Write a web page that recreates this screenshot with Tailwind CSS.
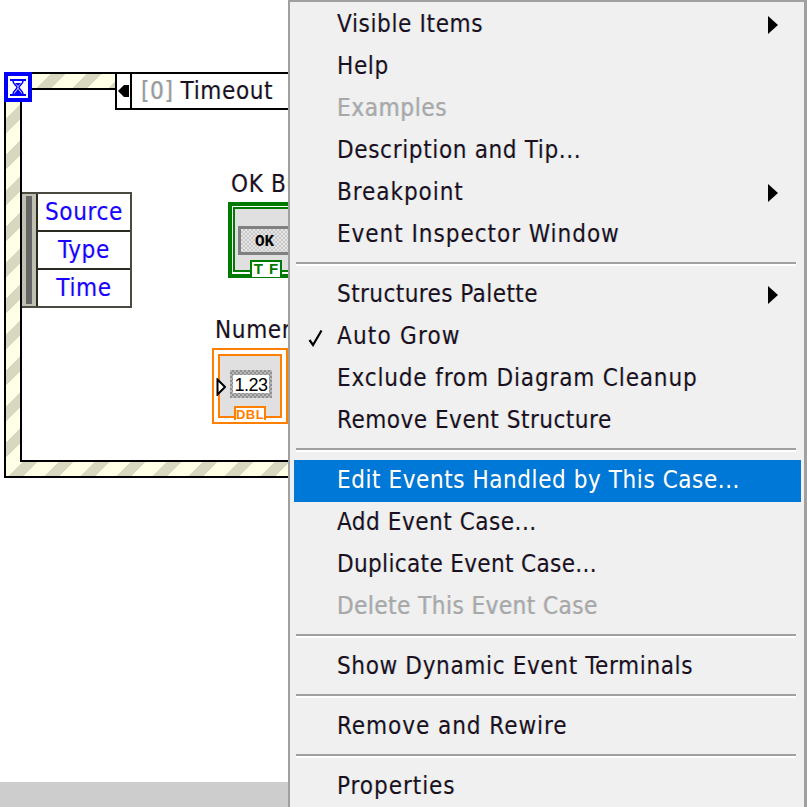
<!DOCTYPE html>
<html><head><meta charset="utf-8">
<script src="https://cdn.jsdelivr.net/npm/@tailwindcss/browser@4"></script>
</head>
<body class="m-0 bg-white">
<div class="relative w-[807px] h-[807px] overflow-hidden bg-white font-['DejaVu_Sans',sans-serif] font-stretch-condensed text-[24px] tracking-[0.65px] text-[#1a1020] [text-shadow:-0.6px_0_rgba(255,140,0,0.22),0.6px_0_rgba(0,150,255,0.28)]">

  <!-- event structure frame -->
  <div class="absolute left-[4px] top-[72px] w-[340px] h-[406px] border-2 border-black bg-[repeating-linear-gradient(135deg,#ffffe6_0px,#ffffe6_5.66px,#d8d8c0_5.66px,#d8d8c0_16.66px,#ffffe6_16.66px,#ffffe6_25.46px)]">
    <div class="absolute left-[14px] top-[14px] right-[-2px] bottom-[14px] bg-white border-2 border-black"></div>
  </div>

  <!-- hourglass terminal -->
  <div class="absolute left-[4px] top-[72px] w-[28px] h-[30px] bg-[#0000ff] flex items-center justify-center">
    <div class="w-[20px] h-[22px] bg-white flex items-center justify-center">
      <svg width="18" height="20" viewBox="0 0 18 20"><path d="M1 3H17M1 18H17" fill="none" stroke="#0000ff" stroke-width="2"/><path d="M4 4C4 7 8 9 8 10.500C8 12 4 14 4 17M14 4C14 7 10 9 10 10.500C10 12 14 14 14 17" fill="none" stroke="#0000ff" stroke-width="1.500"/><path d="M6 6H12L9 9ZM9 12L13 17H5Z" fill="#0000ff"/></svg>
    </div>
  </div>

  <!-- case selector -->
  <div class="absolute left-[115px] top-[72px] w-[180px] h-[38px] border-2 border-black bg-white flex items-center">
    <div class="w-[13px] h-full flex items-center justify-center">
      <svg width="12" height="12" viewBox="0 0 12 12"><path d="M0 6L6 0H11V12H6Z" fill="#000"/></svg>
    </div>
    <div class="w-[2px] h-full bg-black"></div>
    <div class="pl-[9px] whitespace-nowrap leading-none"><span class="text-[#9a9a9a]">[0]</span><span class="ml-[7px]">Timeout</span></div>
  </div>

  <!-- event data node -->
  <div class="absolute left-[22px] top-[192px] w-[110px] h-[116px] border-2 border-l-0 border-[#4a4a40] bg-white flex">
    <div class="w-[14px] bg-[#c0c0b0] flex justify-start pl-[4px] py-[2px]"><div class="w-[6px] bg-[#666666]"></div></div>
    <div class="flex-1 border-l-2 border-[#2a2a20] flex flex-col text-[#1a00ff] text-center leading-none">
      <div class="h-[36px] flex items-center justify-center">Source</div>
      <div class="h-[38px] flex items-center justify-center border-t-2 border-[#2a2a20]">Type</div>
      <div class="flex-1 flex items-center justify-center border-t-2 border-[#2a2a20]">Time</div>
    </div>
  </div>

  <!-- OK Button terminal -->
  <div class="absolute left-[231px] top-[170px] leading-[28px] whitespace-nowrap">OK Button</div>
  <div class="absolute left-[228px] top-[202px] w-[72px] h-[76px] border-4 border-[#007a00] bg-white p-[1px] [text-shadow:none]">
    <div class="relative w-full h-[65px] border-2 border-[#007a00] bg-[#e0e0e0]">
      <div class="absolute left-[3px] top-[17px] w-[60px] h-[29px] border-[3px] border-[#808080] bg-[repeating-conic-gradient(#c8c8c8_0_25%,#e6e6e6_0_50%)] bg-size-[4px_4px] flex items-center pt-[2px] pl-[14px] font-['Liberation_Mono',monospace] font-bold text-[16px] tracking-normal leading-none text-black">OK</div>
      <div class="absolute left-[15px] top-[51px] w-[32px] h-[17px] border-2 border-b-0 border-[#007a00] bg-white flex items-center justify-center gap-[6px] pb-[2px] font-['Liberation_Sans',sans-serif] font-bold text-[15px] tracking-normal leading-none text-[#007a00]"><span>T</span><span>F</span></div>
    </div>
  </div>

  <!-- Numeric terminal -->
  <div class="absolute left-[215px] top-[316px] leading-[28px] whitespace-nowrap">Numeric</div>
  <div class="absolute left-[212px] top-[348px] w-[76px] h-[76px] border-2 border-[#ff8000] bg-white p-[4px] [text-shadow:none]">
    <div class="relative w-full h-[64px] border-2 border-[#ff8000] bg-[#e0e0e0]">
      <div class="absolute left-[10px] top-[14px] w-[42px] h-[28px] bg-[repeating-conic-gradient(#909090_0_25%,#b8b8b8_0_50%)] bg-size-[4px_4px] flex items-center justify-center">
        <div class="w-[36px] h-[18px] bg-white flex items-center justify-center pt-[2px] font-['Liberation_Sans',sans-serif] text-[18px] tracking-[-0.5px] leading-none text-black">1.23</div>
      </div>
      <div class="absolute left-[14px] top-[50px] w-[32px] h-[14px] border-2 border-b-0 border-[#ff8000] bg-white flex items-center justify-center font-['Liberation_Sans',sans-serif] font-bold text-[13px] tracking-[0.5px] leading-none text-[#ff8000]">DBL</div>
    </div>
    <svg class="absolute left-[2px] top-[28px]" width="10" height="18" viewBox="0 0 10 18"><path d="M1.500 1.500L9 9L1.500 16.500Z" fill="#fff" stroke="#000" stroke-width="2"/></svg>
  </div>

  <!-- bottom bar -->
  <div class="absolute left-0 bottom-0 w-[290px] h-[25px] bg-[#cdcdcd]"></div>

  <!-- context menu -->
  <div class="absolute left-[288px] top-0 w-[519px] h-[807px] border-l-2 border-t-2 border-r-[3px] border-[#a0a0a0] bg-[#f0f0f0] leading-none">
    <div class="h-[42px] flex items-center pt-[2px] pl-[47px] pr-[26px] justify-between"><span>Visible Items</span><svg class="mt-[2px]" width="10" height="18" viewBox="0 0 10 18"><path d="M0 0L10 9L0 18Z" fill="#000"/></svg></div>
    <div class="h-[42px] flex items-center pt-[2px] pl-[47px]">Help</div>
    <div class="h-[42px] flex items-center pt-[2px] pl-[47px] text-[#a8a8a8]">Examples</div>
    <div class="h-[42px] flex items-center pt-[2px] pl-[47px]">Description and Tip...</div>
    <div class="h-[42px] flex items-center pt-[2px] pl-[47px] pr-[26px] justify-between"><span class="tracking-[0.95px]">Breakpoint</span><svg class="mt-[2px]" width="10" height="18" viewBox="0 0 10 18"><path d="M0 0L10 9L0 18Z" fill="#000"/></svg></div>
    <div class="h-[42px] flex items-center pt-[2px] pl-[47px] tracking-[0.97px]">Event Inspector Window</div>
    <div class="h-[18px] pt-[8px] pl-[6px] pr-[8px]"><div class="h-[2px] bg-[#a0a0a0]"></div><div class="h-[2px] bg-white"></div></div>

    <div class="h-[42px] flex items-center pt-[2px] pl-[47px] pr-[26px] justify-between"><span class="tracking-[0.43px]">Structures Palette</span><svg class="mt-[2px]" width="10" height="18" viewBox="0 0 10 18"><path d="M0 0L10 9L0 18Z" fill="#000"/></svg></div>
    <div class="relative h-[42px] flex items-center pt-[2px] pl-[47px] tracking-[1.2px]"><svg class="absolute left-[18px] top-[15px]" width="15" height="18" viewBox="0 0 15 18"><path d="M1.500 11L5 16L13.500 1.500" fill="none" stroke="#000" stroke-width="2.200"/></svg>Auto Grow</div>
    <div class="h-[42px] flex items-center pt-[2px] pl-[47px] tracking-[0.85px]">Exclude from Diagram Cleanup</div>
    <div class="h-[42px] flex items-center pt-[2px] pl-[47px] tracking-[0.51px]">Remove Event Structure</div>
    <div class="h-[18px] pt-[8px] pl-[6px] pr-[8px]"><div class="h-[2px] bg-[#a0a0a0]"></div><div class="h-[2px] bg-white"></div></div>

    <div class="h-[42px] ml-[4px] mr-[3px] mt-[2px] mb-[-2px] bg-[#0078d7] text-white flex items-center pl-[43px] pb-[2px] tracking-[0.57px]">Edit Events Handled by This Case...</div>
    <div class="h-[42px] flex items-center pt-[2px] pl-[47px] tracking-[0.53px]">Add Event Case...</div>
    <div class="h-[42px] flex items-center pt-[2px] pl-[47px] tracking-[0.35px]">Duplicate Event Case...</div>
    <div class="h-[42px] flex items-center pt-[2px] pl-[47px] tracking-[0.47px] text-[#a8a8a8]">Delete This Event Case</div>
    <div class="h-[18px] pt-[8px] pl-[6px] pr-[8px]"><div class="h-[2px] bg-[#a0a0a0]"></div><div class="h-[2px] bg-white"></div></div>

    <div class="h-[42px] flex items-center pt-[2px] pl-[47px]">Show Dynamic Event Terminals</div>
    <div class="h-[18px] pt-[8px] pl-[6px] pr-[8px]"><div class="h-[2px] bg-[#a0a0a0]"></div><div class="h-[2px] bg-white"></div></div>

    <div class="h-[42px] flex items-center pt-[2px] pl-[47px] tracking-[0.95px]">Remove and Rewire</div>
    <div class="h-[18px] pt-[8px] pl-[6px] pr-[8px]"><div class="h-[2px] bg-[#a0a0a0]"></div><div class="h-[2px] bg-white"></div></div>

    <div class="h-[42px] flex items-center pt-[2px] pl-[47px] tracking-[0.95px]">Properties</div>
  </div>
</div>
</body></html>
